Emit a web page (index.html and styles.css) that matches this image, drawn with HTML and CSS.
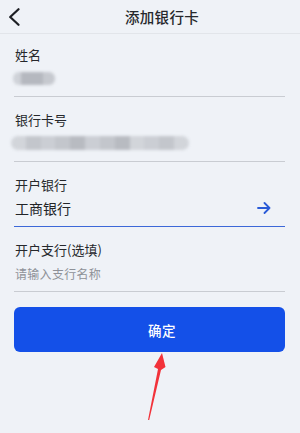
FILE: index.html
```html
<!DOCTYPE html>
<html lang="zh">
<head>
<meta charset="utf-8">
<link rel="stylesheet" href="styles.css">
</head>
<body>
<div class="page">
  <header class="topbar">
    <div class="back">
      <svg width="12" height="18" viewBox="0 0 12 18"><path d="M10.5 1.2 L2.2 9 L10.5 16.8" fill="none" stroke="#1d1f24" stroke-width="2.2" stroke-linecap="round" stroke-linejoin="round"/></svg>
    </div>
    <div class="title">添加银行卡</div>
  </header>
  <main class="form">
    <div class="field first">
      <div class="label">姓名</div>
      <div class="value"><div class="blur-name"><span class="b1"></span><span class="b2"></span><span class="b3"></span></div></div>
    </div>
    <div class="field">
      <div class="label">银行卡号</div>
      <div class="value"><div class="blur-card"><span class="c1"></span><span class="c2"></span><span class="c3"></span><span class="c2"></span><span class="c4"></span><span class="c3"></span><span class="c2"></span><span class="c4"></span><span class="c1"></span><span class="c3"></span><span class="c2"></span><span class="c1"></span></div></div>
    </div>
    <div class="field active">
      <div class="label">开户银行</div>
      <div class="value row"><span class="bank">工商银行</span>
        <svg class="go" width="14" height="12" viewBox="0 0 14 12"><path d="M1 6 H12.5 M7.5 1 L12.5 6 L7.5 11" fill="none" stroke="#2a5bd7" stroke-width="1.8" stroke-linecap="round" stroke-linejoin="round"/></svg>
      </div>
    </div>
    <div class="field">
      <div class="label">开户支行(选填)</div>
      <div class="value"><span class="placeholder">请输入支行名称</span></div>
    </div>
    <button class="confirm">确定</button>
  </main>
  <svg class="pointer" width="300" height="433" viewBox="0 0 300 433">
    <polygon points="148,420 149.2,420 161,370 165.5,367 162,353 154,367 158,369" fill="#f2323a"/>
  </svg>
</div>
</body>
</html>
```
FILE: styles.css
```css
* { box-sizing: border-box; margin: 0; padding: 0; }
html, body { width: 300px; height: 433px; overflow: hidden; }
body {
  background: #eff2f7;
  font-family: "Noto Sans CJK SC", "Noto Sans", sans-serif;
  color: #222428;
}
.page { position: relative; width: 300px; height: 433px; }
.topbar {
  display: flex;
  align-items: center;
  height: 34px;
  border-bottom: 1px solid #e2e5ea;
}
.back {
  width: 24px;
  height: 33px;
  display: flex;
  align-items: center;
  padding-left: 8px;
  padding-top: 1px;
}
.title {
  flex: 1;
  text-align: center;
  font-size: 14.5px;
  font-weight: 500;
  letter-spacing: 0.3px;
  line-height: 33px;
  color: #26282c;
}
.form { padding: 0 15px 0 14px; display: flex; flex-direction: column; }
.field {
  padding: 13px 1px 6px 1px;
  border-bottom: 1px solid #c9ccd2;
}
.field.first { padding-top: 11px; }
.field.active { border-bottom: 1px solid #3c68d8; }
.label {
  font-size: 13px;
  line-height: 20px;
  color: #26282c;
}
.value {
  margin-top: 1px;
  height: 24px;
  display: flex;
  align-items: center;
}
.value.row { justify-content: space-between; }
.bank { font-size: 14px; color: #222428; }
.go { margin-right: 13px; }
.placeholder { font-size: 12px; color: #8e9198; letter-spacing: 0.3px; }
.blur-name {
  display: flex;
  height: 13px;
  width: 42px;
  margin-left: -2px;
  filter: blur(1.6px);
  border-radius: 6px;
  overflow: hidden;
}
.blur-name span { display: block; height: 100%; }
.b1 { width: 8px; background: #cfd2d8; }
.b2 { width: 22px; background: #b5b8bf; }
.b3 { width: 12px; background: #c6c9cf; }
.blur-card {
  display: flex;
  height: 14px;
  width: 178px;
  margin-left: -4px;
  filter: blur(1.5px);
  border-radius: 7px;
  overflow: hidden;
}
.blur-card span { display: block; flex: 1; height: 100%; }
.c1 { background: #d2d5da; }
.c2 { background: #c3c6cc; }
.c3 { background: #cbced4; }
.c4 { background: #b8bbc1; }
.confirm {
  margin-top: 15px;
  height: 45px;
  padding-left: 25px;
  border: none;
  border-radius: 6px;
  background: #1450e8;
  color: #ffffff;
  font-family: "Noto Sans CJK SC", "Noto Sans", sans-serif;
  font-size: 13.5px;
  font-weight: 500;
  letter-spacing: 0.5px;
}
.pointer { position: absolute; left: 0; top: 0; pointer-events: none; }
```
